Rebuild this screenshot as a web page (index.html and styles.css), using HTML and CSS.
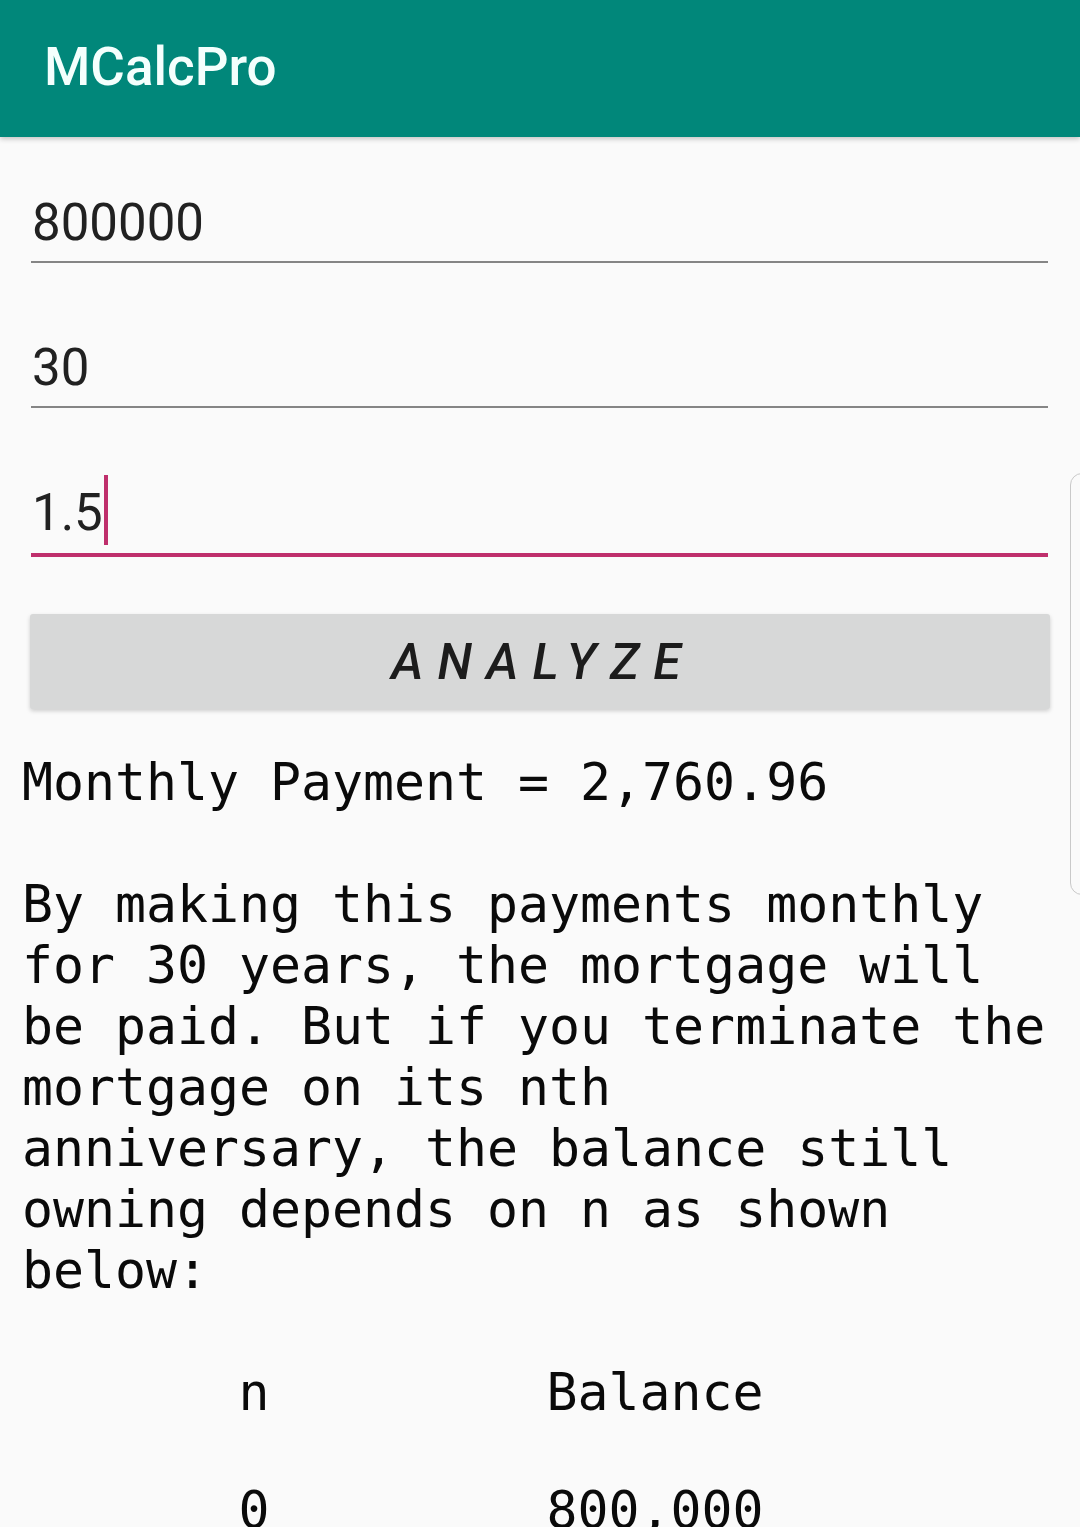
FILE: index.html
```html
<!DOCTYPE html>
<html lang="en">
<head>
<meta charset="utf-8">
<title>MCalcPro</title>
<link rel="stylesheet" href="styles.css">
</head>
<body>
<header class="appbar">
  <h1 class="appbar-title">MCalcPro</h1>
</header>
<main class="content">
  <div class="field"><span class="field-text">800000</span></div>
  <div class="field"><span class="field-text">30</span></div>
  <div class="field field-focused"><span class="field-text">1.5</span><span class="cursor"></span></div>
  <button class="analyze-btn" type="button">ANALYZE</button>
  <p class="result">Monthly Payment = 2,760.96</p>
  <p class="result result-para">By making this payments monthly<br>for 30 years, the mortgage will<br>be paid. But if you terminate the<br>mortgage on its nth<br>anniversary, the balance still<br>owning depends on n as shown<br>below:</p>
  <div class="table">
    <span class="cell">n</span><span class="cell">Balance</span>
    <span class="cell">0</span><span class="cell">800,000</span>
  </div>
</main>
<div class="edge-handle"></div>
</body>
</html>
```
FILE: styles.css
```css
html, body {
  margin: 0;
  padding: 0;
  background: #fafafa;
}
body {
  width: 1080px;
  height: 1527px;
  overflow: hidden;
  position: relative;
  font-family: Roboto, "Liberation Sans", sans-serif;
}
.appbar {
  box-sizing: border-box;
  height: 137px;
  background: #01877a;
  padding: 36px 0 0 44px;
  box-shadow: 0 2px 5px rgba(0, 0, 0, 0.22);
  position: relative;
  z-index: 1;
}
.appbar-title {
  margin: 0;
  font-family: Roboto, "Liberation Sans", sans-serif;
  font-weight: 500;
  font-size: 53px;
  line-height: 62px;
  color: #f4fffd;
}
.content {
  padding: 56px 0 0 22px;
}
.field {
  margin: 0 32px 75px 9px;
  padding-bottom: 8px;
  border-bottom: 2px solid #858585;
  font-size: 51px;
  line-height: 60px;
  color: #212121;
  white-space: nowrap;
}
.field-text {
  padding-left: 1px;
}
.field-focused {
  border-bottom: 4px solid #bf2f6c;
  margin-bottom: 0;
}
.cursor {
  display: inline-block;
  width: 4px;
  height: 70px;
  margin-top: -10px;
  margin-left: 1px;
  background: #bf2f6c;
  vertical-align: -15px;
}
.analyze-btn {
  display: block;
  box-sizing: border-box;
  width: 1020px;
  height: 95px;
  margin: 57px 0 0 8px;
  padding: 0 0 0 6px;
  border: none;
  border-radius: 3px;
  background: #d7d8d8;
  box-shadow: 0 2px 4px rgba(0, 0, 0, 0.18);
  font-family: Roboto, "Liberation Sans", sans-serif;
  font-style: italic;
  font-weight: 500;
  font-size: 50px;
  letter-spacing: 14px;
  color: #1c1c1c;
}
.result {
  margin: 43px 0 0 0;
  font-family: "DejaVu Sans Mono", "Liberation Mono", monospace;
  font-size: 51.5px;
  line-height: 61px;
  color: #0a0a0a;
  white-space: nowrap;
}
.result-para {
  margin-top: 61px;
}
.table {
  display: grid;
  grid-template-columns: 300px 502px;
  row-gap: 57px;
  margin: 61px 0 0 82px;
  font-family: "DejaVu Sans Mono", "Liberation Mono", monospace;
  font-size: 51.5px;
  line-height: 61px;
  color: #0a0a0a;
}
.cell {
  text-align: center;
}
.edge-handle {
  position: absolute;
  left: 1070px;
  top: 473px;
  width: 40px;
  height: 420px;
  border: 1.5px solid #c9c9c9;
  border-radius: 12px;
  background: #fafafa;
}
```
